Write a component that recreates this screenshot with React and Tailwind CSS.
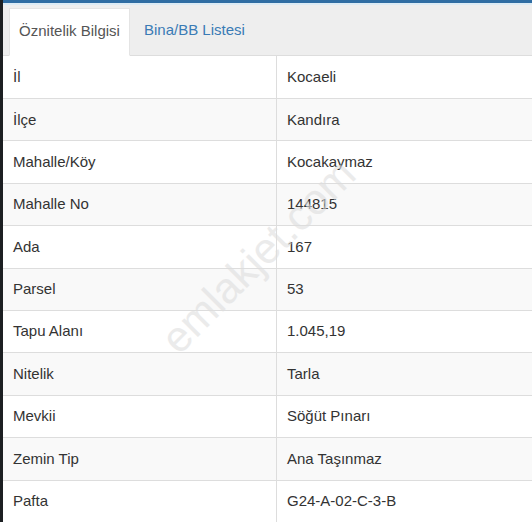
const rows = [
  ['İl', 'Kocaeli'],
  ['İlçe', 'Kandıra'],
  ['Mahalle/Köy', 'Kocakaymaz'],
  ['Mahalle No', '144815'],
  ['Ada', '167'],
  ['Parsel', '53'],
  ['Tapu Alanı', '1.045,19'],
  ['Nitelik', 'Tarla'],
  ['Mevkii', 'Söğüt Pınarı'],
  ['Zemin Tip', 'Ana Taşınmaz'],
  ['Pafta', 'G24-A-02-C-3-B'],
];

export default function App() {
  return (
    <div
      className="relative w-[532px] h-[522px] overflow-hidden bg-white flex"
      style={{ fontFamily: '"Liberation Sans", Arial, sans-serif' }}
    >
      <div className="w-[3px] shrink-0 bg-[#1c1f22]" />
      <div className="flex-1 flex flex-col min-w-0">
        <div className="h-[3px] bg-[#2f6da3]" />
        <div className="h-[2px] bg-[#dcebf5]" />
        <div className="h-[51px] bg-[#eeeeee] border-b border-[#dddddd] flex items-end pl-[6px]">
          <div className="h-[48px] -mb-px w-[121px] bg-white border border-[#e4e4e4] border-b-white flex items-center justify-center text-[15px] text-[#555555]">
            Öznitelik Bilgisi
          </div>
          <div className="h-[48px] px-[14px] flex items-center text-[15px] text-[#3a7bb5]">
            Bina/BB Listesi
          </div>
        </div>
        <div className="flex flex-col">
          {rows.map(([k, v], i) => (
            <div
              key={k}
              className={`h-[42.4px] flex text-[15px] text-[#333333] ${i > 0 ? 'border-t border-[#dddddd]' : ''} ${i % 2 === 1 ? 'bg-[#f9f9f9]' : 'bg-white'}`}
            >
              <div className="w-[274px] shrink-0 border-r border-[#dddddd] flex items-center pl-[10px]">{k}</div>
              <div className="flex-1 flex items-center pl-[10px]">{v}</div>
            </div>
          ))}
        </div>
      </div>
      <div
        className="pointer-events-none absolute left-[258px] top-[256px] -translate-x-1/2 -translate-y-1/2 -rotate-[45deg] text-[43px] text-[#dedede] opacity-60 whitespace-nowrap"
        style={{ fontFamily: '"Liberation Sans", Arial, sans-serif' }}
      >
        emlakjet.com
      </div>
    </div>
  );
}
